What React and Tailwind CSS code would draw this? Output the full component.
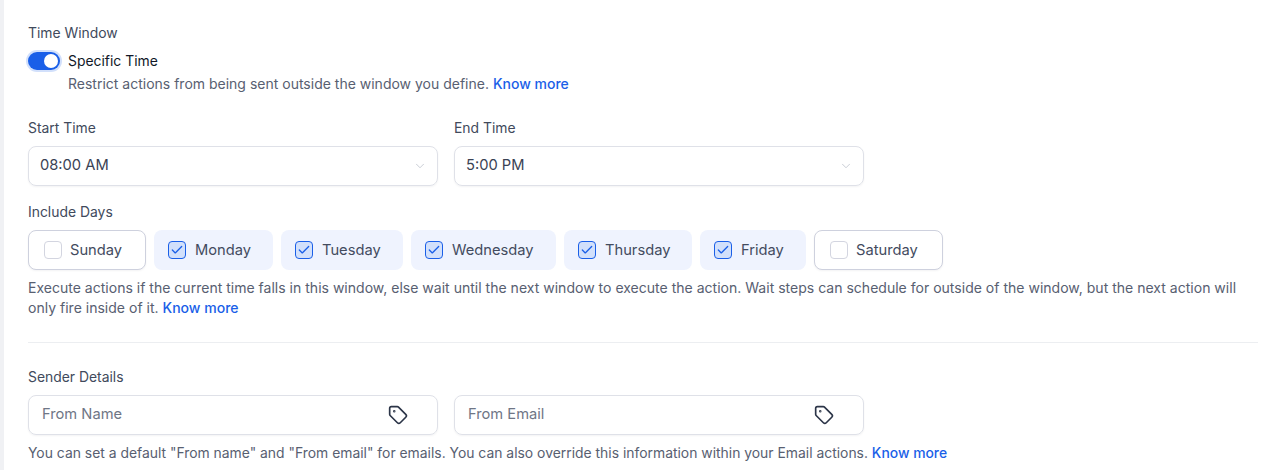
import { ChevronDown, Check, Tag } from 'lucide-react';

const days = [
  { name: 'Sunday', checked: false, width: 'w-[118px]' },
  { name: 'Monday', checked: true, width: 'w-[119px]' },
  { name: 'Tuesday', checked: true, width: 'w-[122px]' },
  { name: 'Wednesday', checked: true, width: 'w-[145px]' },
  { name: 'Thursday', checked: true, width: 'w-[128px]' },
  { name: 'Friday', checked: true, width: 'w-[106px]' },
  { name: 'Saturday', checked: false, width: 'w-[129px]' },
];

function KnowMore() {
  return <span className="font-medium text-[#1a5fe8]">Know more</span>;
}

function SelectBox({ label, value }) {
  return (
    <div className="w-[410px]">
      <div className="text-[13.9px] leading-5 text-[#414a5c]">{label}</div>
      <div className="mt-2 flex h-10 items-center justify-between rounded-lg border border-[#dfe1e8] pl-[11px] pr-[10px] shadow-[0_1px_2px_rgba(16,24,40,0.05)]">
        <span className="pb-[2px] text-[14.7px] text-[#3a4254]">{value}</span>
        <ChevronDown className="h-3.5 w-3.5 text-[#b6bbc6]" strokeWidth={1.25} />
      </div>
    </div>
  );
}

function TagInput({ placeholder }) {
  return (
    <div className="flex h-10 w-[410px] items-center justify-between rounded-lg border border-[#dfe1e8] pl-[13px] pr-[29px] shadow-[0_1px_2px_rgba(16,24,40,0.05)]">
      <span className="pb-[2px] text-[14.7px] text-[#6f7686]">{placeholder}</span>
      <Tag className="h-5 w-5 text-[#2c3548]" strokeWidth={2} />
    </div>
  );
}

function DayChip({ name, checked, width }) {
  return (
    <div
      className={`${width} ${
        checked
          ? 'flex h-10 items-center gap-[9px] rounded-lg bg-[#eff3fe] pl-[14px]'
          : 'flex h-10 items-center gap-2 rounded-lg border border-[#ced1de] bg-white pl-[15px] shadow-[0_1px_2px_rgba(16,24,40,0.05)]'
      }`}
    >
      {checked ? (
        <span className="flex h-[18px] w-[18px] items-center justify-center rounded-[4px] border border-[#1a5fe8] bg-[#d2e0fb]">
          <Check className="h-3.5 w-3.5 text-[#1a5fe8]" strokeWidth={2.25} />
        </span>
      ) : (
        <span className="h-[18px] w-[18px] rounded-[4px] border border-[#d3d5e0] bg-white" />
      )}
      <span className="text-[14.7px] text-[#434b5e]">{name}</span>
    </div>
  );
}

export default function App() {
  return (
    <div className="h-[470px] w-[1273px] overflow-hidden bg-white font-['Inter',sans-serif]">
      <div className="h-full border-l-4 border-[#f0f1f4] pl-6 pr-[15px] pt-[23px]">
        <div className="text-[13.9px] leading-5 text-[#414a5c]">Time Window</div>

        <div className="mt-[8px] flex items-center gap-2">
          <div className="flex h-[18px] w-8 items-center justify-end rounded-full bg-[#1a5fe8] pr-[2px] ring-2 ring-[#d2e0fb]">
            <div className="h-3.5 w-3.5 rounded-full bg-white" />
          </div>
          <span className="text-[13.9px] leading-5 text-[#111827]">Specific Time</span>
        </div>
        <p className="mt-[3px] pl-10 text-sm leading-5 text-[#586071]">
          Restrict actions from being sent outside the window you define. <KnowMore />
        </p>

        <div className="mt-6 flex gap-4">
          <SelectBox label="Start Time" value="08:00 AM" />
          <SelectBox label="End Time" value="5:00 PM" />
        </div>

        <div className="mt-4 text-[13.9px] leading-5 text-[#414a5c]">Include Days</div>
        <div className="mt-2 flex gap-2">
          {days.map((d) => (
            <DayChip key={d.name} name={d.name} checked={d.checked} width={d.width} />
          ))}
        </div>
        <p className="mt-2 text-[14.04px] leading-[20px] text-[#586071]">
          Execute actions if the current time falls in this window, else wait until the next window to execute the action. Wait steps can schedule for outside of the window, but the next action will only fire inside of it. <KnowMore />
        </p>

        <div className="mt-6 border-t border-[#eceef1]" />

        <div className="mt-6 text-[13.9px] leading-5 text-[#414a5c]">Sender Details</div>
        <div className="mt-2 flex gap-4">
          <TagInput placeholder="From Name" />
          <TagInput placeholder="From Email" />
        </div>
        <p className="mt-2 text-[13.9px] leading-5 text-[#586071]">
          You can set a default "From name" and "From email" for emails. You can also override this information within your Email actions. <KnowMore />
        </p>
      </div>
    </div>
  );
}
